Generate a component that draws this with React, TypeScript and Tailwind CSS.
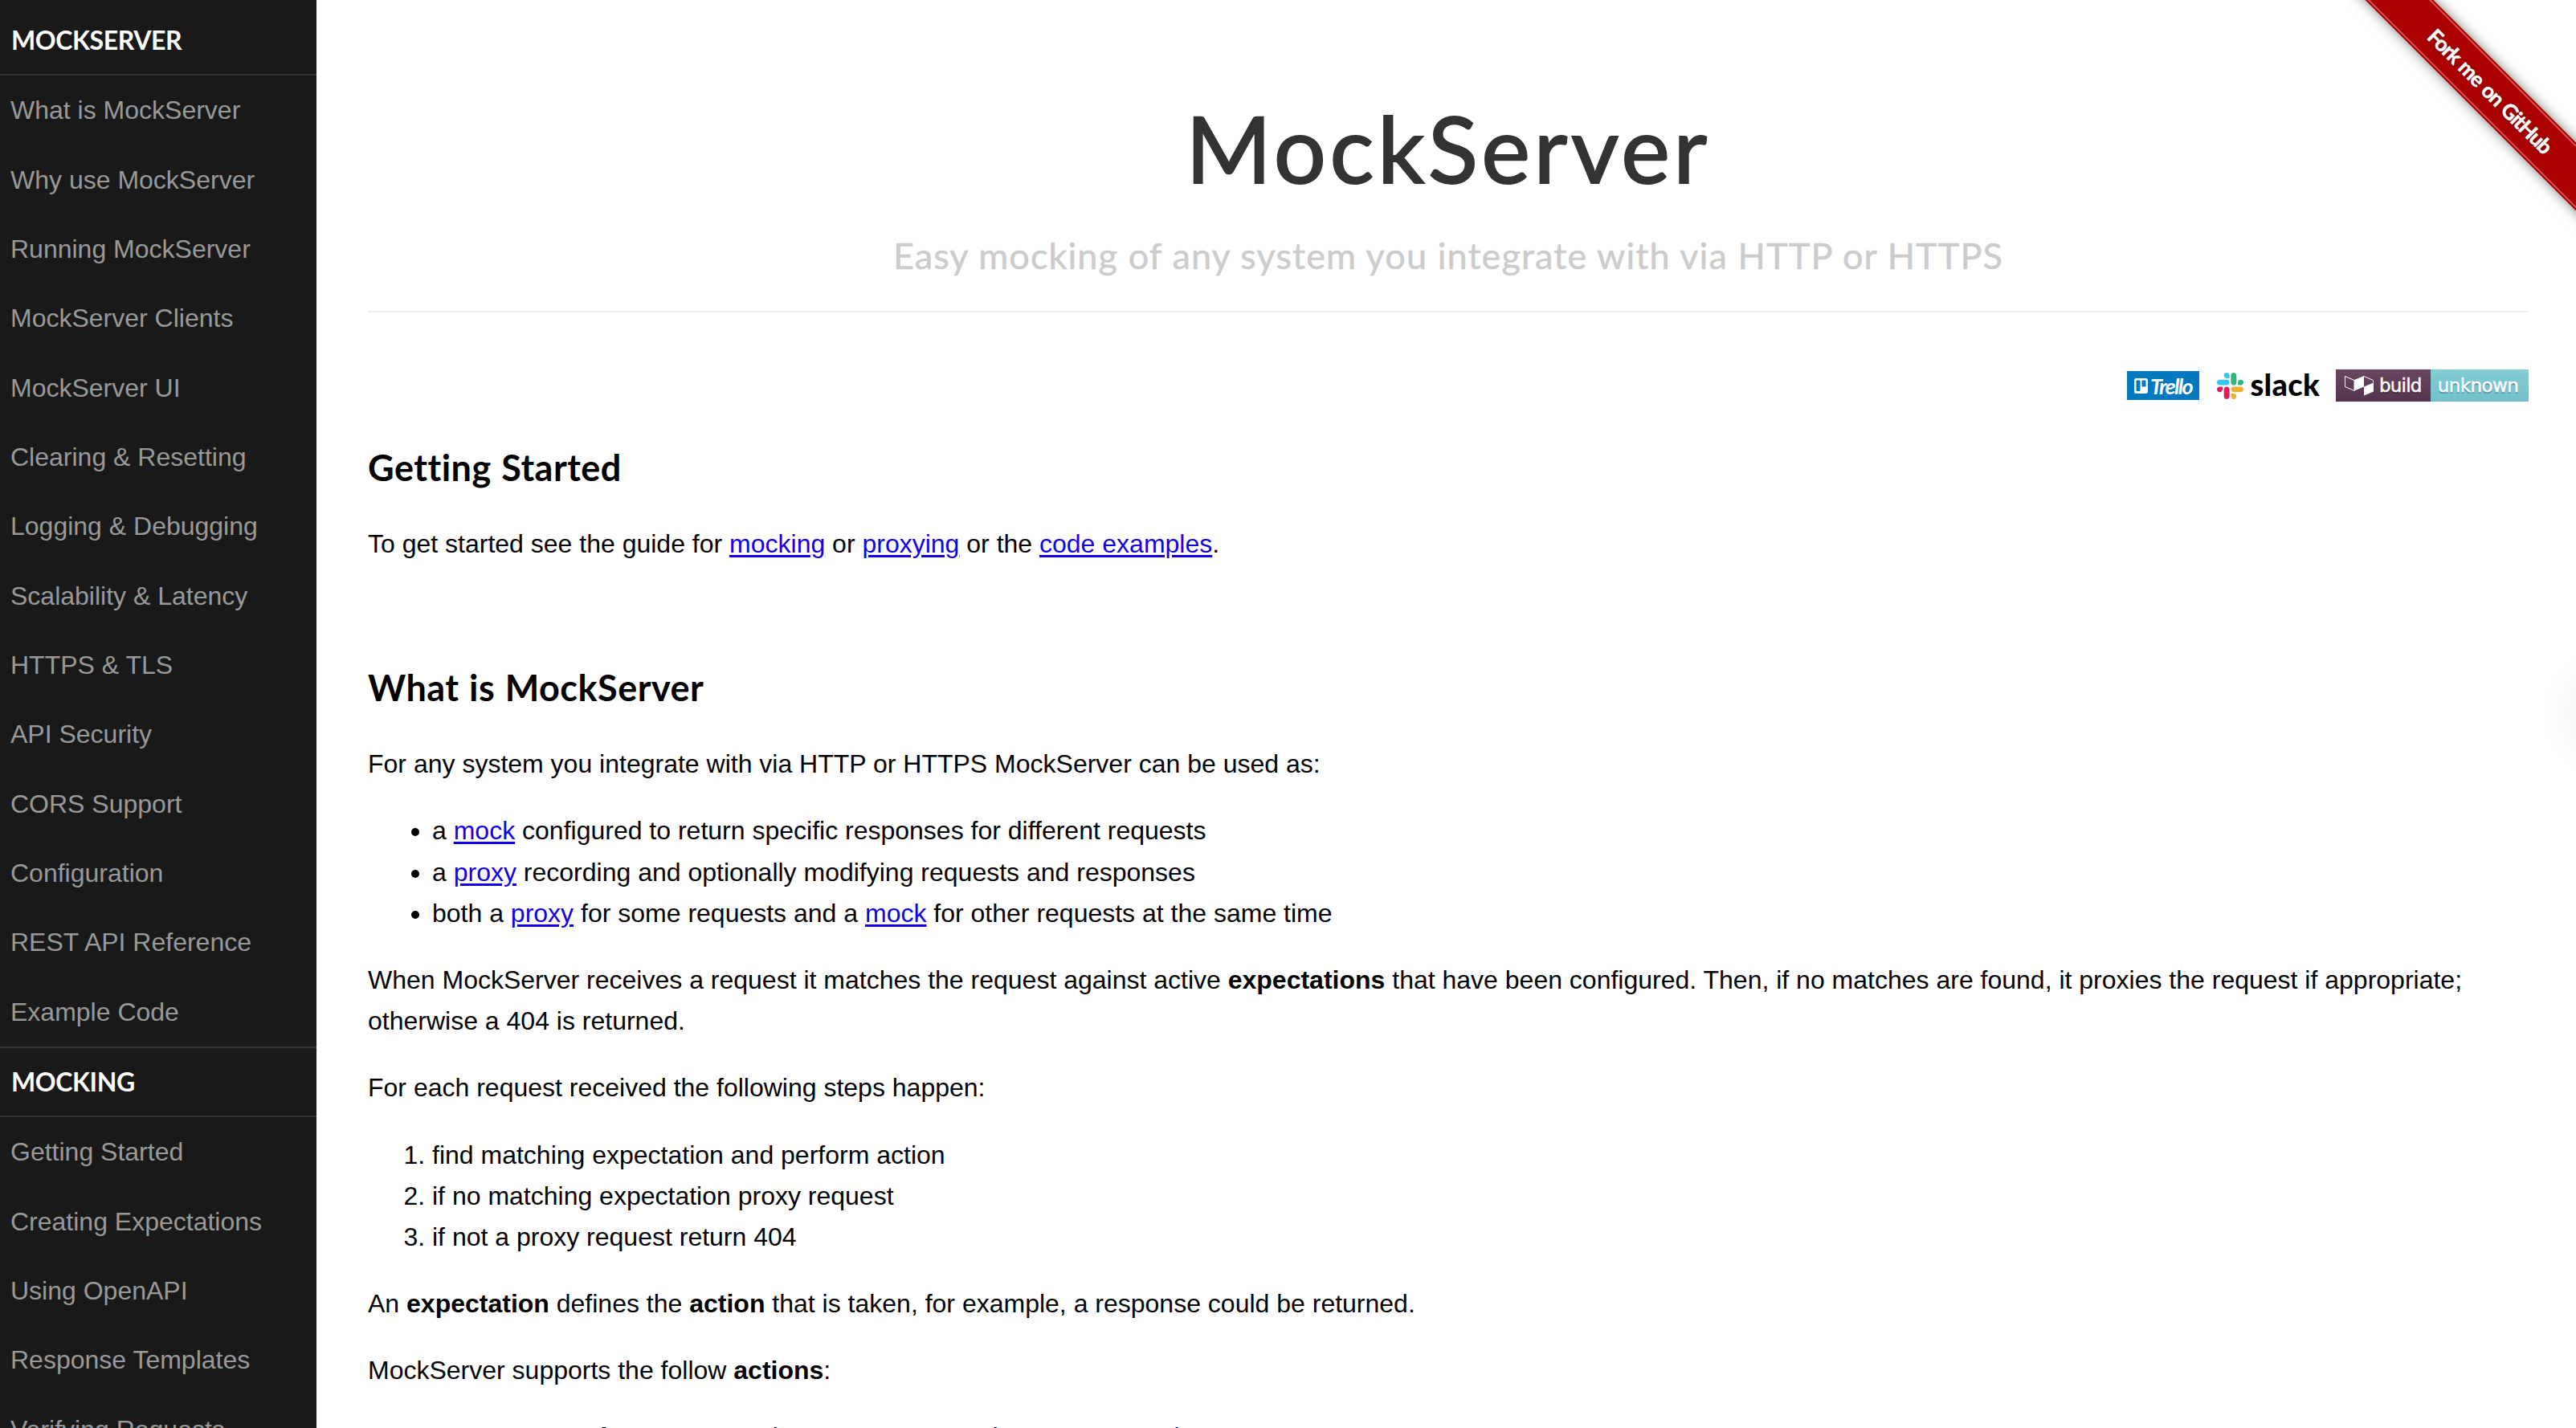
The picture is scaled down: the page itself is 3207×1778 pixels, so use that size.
import type { ReactNode } from "react";

const MOCKSERVER_LINKS = [
  "What is MockServer",
  "Why use MockServer",
  "Running MockServer",
  "MockServer Clients",
  "MockServer UI",
  "Clearing & Resetting",
  "Logging & Debugging",
  "Scalability & Latency",
  "HTTPS & TLS",
  "API Security",
  "CORS Support",
  "Configuration",
  "REST API Reference",
  "Example Code",
];

const MOCKING_LINKS = [
  "Getting Started",
  "Creating Expectations",
  "Using OpenAPI",
  "Response Templates",
  "Verifying Requests",
];

function MenuHeading({ children }: { children: ReactNode }) {
  return (
    <h2 className="flex h-[86px] shrink-0 items-center border-b-2 border-[#333] pl-[14px] font-['Lato',sans-serif] text-[32px] font-bold tracking-[-0.4px] text-white">
      {children}
    </h2>
  );
}

function MenuLinks({ links }: { links: string[] }) {
  return (
    <ul>
      {links.map((label) => (
        <li key={label} className="flex h-[86.36px] items-center pl-[13px]">
          <a href="#" className="text-[32px] leading-none text-[#999]">
            {label}
          </a>
        </li>
      ))}
    </ul>
  );
}

function Sidebar() {
  return (
    <nav className="flex w-[394px] shrink-0 flex-col overflow-hidden bg-[#191919] pt-2">
      <MenuHeading>MOCKSERVER</MenuHeading>
      <MenuLinks links={MOCKSERVER_LINKS} />
      <div className="border-t-2 border-[#333]">
        <MenuHeading>MOCKING</MenuHeading>
      </div>
      <MenuLinks links={MOCKING_LINKS} />
    </nav>
  );
}

function SectionTitle({ children }: { children: ReactNode }) {
  return (
    <h2 className="-mt-px font-['Lato',sans-serif] text-[45px] leading-[60px] font-bold tracking-[0.5px] [word-spacing:1px]">
      {children}
    </h2>
  );
}

function A({ children }: { children: ReactNode }) {
  return (
    <a href="#" className="text-[#1400e6] underline decoration-[3px] underline-offset-[3px]">
      {children}
    </a>
  );
}

function TrelloBadge() {
  return (
    <a href="#" className="flex h-9 w-[90px] items-center bg-[#0079bf] pl-[9px] text-white">
      <svg width="17" height="19" viewBox="0 0 17 19">
        <rect width="17" height="19" rx="2.5" fill="#fff" />
        <rect x="2.5" y="2.5" width="5" height="13.5" rx="1" fill="#0079bf" />
        <rect x="9.5" y="2.5" width="5" height="8" rx="1" fill="#0079bf" />
      </svg>
      <span className="ml-[3px] font-['Lato',sans-serif] text-[27px] leading-none font-bold tracking-[-1.7px] italic">
        Trello
      </span>
    </a>
  );
}

function SlackBadge() {
  return (
    <a href="#" className="flex w-32 items-center justify-between text-black">
      <svg width="33" height="33" viewBox="0 0 122.8 122.8">
        <path
          fill="#e01e5a"
          d="M25.8 77.6c0 7.1-5.8 12.9-12.9 12.9S0 84.7 0 77.6s5.8-12.9 12.9-12.9h12.9v12.9zm6.5 0c0-7.1 5.8-12.9 12.9-12.9s12.9 5.8 12.9 12.9v32.3c0 7.1-5.8 12.9-12.9 12.9s-12.9-5.8-12.9-12.9V77.6z"
        />
        <path
          fill="#36c5f0"
          d="M45.2 25.8c-7.1 0-12.9-5.8-12.9-12.9S38.1 0 45.2 0s12.9 5.8 12.9 12.9v12.9H45.2zm0 6.5c7.1 0 12.9 5.8 12.9 12.9s-5.8 12.9-12.9 12.9H12.9C5.8 58.1 0 52.3 0 45.2s5.8-12.9 12.9-12.9h32.3z"
        />
        <path
          fill="#2eb67d"
          d="M97 45.2c0-7.1 5.8-12.9 12.9-12.9s12.9 5.8 12.9 12.9-5.8 12.9-12.9 12.9H97V45.2zm-6.5 0c0 7.1-5.8 12.9-12.9 12.9s-12.9-5.8-12.9-12.9V12.9C64.7 5.8 70.5 0 77.6 0s12.9 5.8 12.9 12.9v32.3z"
        />
        <path
          fill="#ecb22e"
          d="M77.6 97c7.1 0 12.9 5.8 12.9 12.9s-5.8 12.9-12.9 12.9-12.9-5.8-12.9-12.9V97h12.9zm0-6.5c-7.1 0-12.9-5.8-12.9-12.9s5.8-12.9 12.9-12.9h32.3c7.1 0 12.9 5.8 12.9 12.9s-5.8 12.9-12.9 12.9H77.6z"
        />
      </svg>
      <span className="-mt-1 font-['Lato',sans-serif] text-[38px] leading-8 font-black tracking-[0.3px]">
        slack
      </span>
    </a>
  );
}

function BuildBadge() {
  return (
    <a
      href="#"
      className="flex h-10 w-60 font-['DejaVu_Sans',sans-serif] text-[23px] leading-10 text-white [-webkit-text-stroke:0.5px_white] text-shadow-[0_2px_1px_rgb(0_0_0/0.3)]"
    >
      <span className="flex w-[118px] items-center bg-linear-to-b from-[#694660] to-[#55344f] pl-[11px] tracking-[-0.8px]">
        <svg width="36" height="25" viewBox="0 0 36 25" className="mr-[7px] overflow-visible">
          <path
            d="M0.5 0.5v13l11.5 5v-13zM12 5.5L24 0.5L35.5 5.5V8.5"
            fill="none"
            stroke="#fff"
          />
          <path d="M12 5.5L24 0.5V13.5L12 18.5zM24 13.5L36 8.5V19.5L24 24.5z" fill="#fff" />
        </svg>
        build
      </span>
      <span className="flex-1 bg-linear-to-b from-[#83cdd3] to-[#72c0cb] pr-1 text-center tracking-[-0.6px]">
        unknown
      </span>
    </a>
  );
}

function GithubRibbon() {
  return (
    <a href="#" className="absolute top-0 right-0 block h-[298px] w-[298px] overflow-hidden">
      <span className="absolute top-[85px] left-[-17px] flex h-[60px] w-[420px] rotate-[45deg] items-center justify-center bg-[#a00] pr-[5px] font-['Lato',sans-serif] text-[26px] font-bold tracking-[-1.2px] text-white shadow-[0_0_16px_rgb(0_0_0/0.5)] [-webkit-text-stroke:0.5px_white] text-shadow-[0_0_4px_rgb(0_0_0/0.5)] [word-spacing:2px]">
        <span className="absolute inset-x-0 inset-y-[2px] border-y-2 border-[#d0505a]" />
        Fork me on GitHub
      </span>
    </a>
  );
}

export default function App() {
  return (
    <div className="relative flex h-[1778px] w-[3207px] overflow-hidden bg-white font-['Liberation_Sans',Arial,sans-serif] text-black">
      <Sidebar />

      <main className="flex-1 overflow-hidden pr-[59px] pl-16 text-[32px] leading-[51.2px]">
        <header className="h-[389px] border-b-2 border-[#eee] text-center font-['Lato',sans-serif]">
          <h1 className="pt-[119px] text-[115px] leading-[128px] tracking-[4.5px] text-[#333] [-webkit-text-stroke:2px_#333]">
            MockServer
          </h1>
          <p className="pt-[46px] text-[45px] leading-[50px] tracking-[1.1px] text-[#ccc] [-webkit-text-stroke:0.5px_#ccc]">
            Easy mocking of any system you integrate with via HTTP or HTTPS
          </p>
        </header>

        <div className="mt-[71px] mb-[53px] flex h-10 items-center justify-end">
          <div className="mr-[22px]">
            <TrelloBadge />
          </div>
          <div className="mr-5">
            <SlackBadge />
          </div>
          <BuildBadge />
        </div>

        <section>
          <SectionTitle>Getting Started</SectionTitle>
          <p className="mt-10">
            To get started see the guide for <A>mocking</A> or <A>proxying</A> or the{" "}
            <A>code examples</A>.
          </p>
        </section>

        <section className="pt-[124px]">
          <SectionTitle>What is MockServer</SectionTitle>
          <p className="mt-10">
            For any system you integrate with via HTTP or HTTPS MockServer can be used as:
          </p>
          <ul className="mt-8 list-disc pl-20">
            <li>
              a <A>mock</A> configured to return specific responses for different requests
            </li>
            <li>
              a <A>proxy</A> recording and optionally modifying requests and responses
            </li>
            <li>
              both a <A>proxy</A> for some requests and a <A>mock</A> for other requests at the same
              time
            </li>
          </ul>
          <p className="mt-8">
            When MockServer receives a request it matches the request against active{" "}
            <strong>expectations</strong> that have been configured. Then, if no matches are found,
            it proxies the request if appropriate; otherwise a 404 is returned.
          </p>
          <p className="mt-8">For each request received the following steps happen:</p>
          <ol className="mt-8 list-decimal pl-20">
            <li>find matching expectation and perform action</li>
            <li>if no matching expectation proxy request</li>
            <li>if not a proxy request return 404</li>
          </ol>
          <p className="mt-8">
            An <strong>expectation</strong> defines the <strong>action</strong> that is taken, for
            example, a response could be returned.
          </p>
          <p className="mt-8">
            MockServer supports the follow <strong>actions</strong>:
          </p>
          <ul className="mt-[31px] list-disc pl-20">
            <li>
              return a <strong className="px-[9px]">"mock"</strong> response when a request matches
              an <A>expectation</A>
            </li>
          </ul>
        </section>
      </main>

      <GithubRibbon />

      {/* drawer parked just past the right edge, only its shadow reaches the page */}
      <div className="absolute top-[848px] -right-10 h-20 w-10 shadow-[0_0_48px_rgb(0_0_0/0.07)]" />
    </div>
  );
}
